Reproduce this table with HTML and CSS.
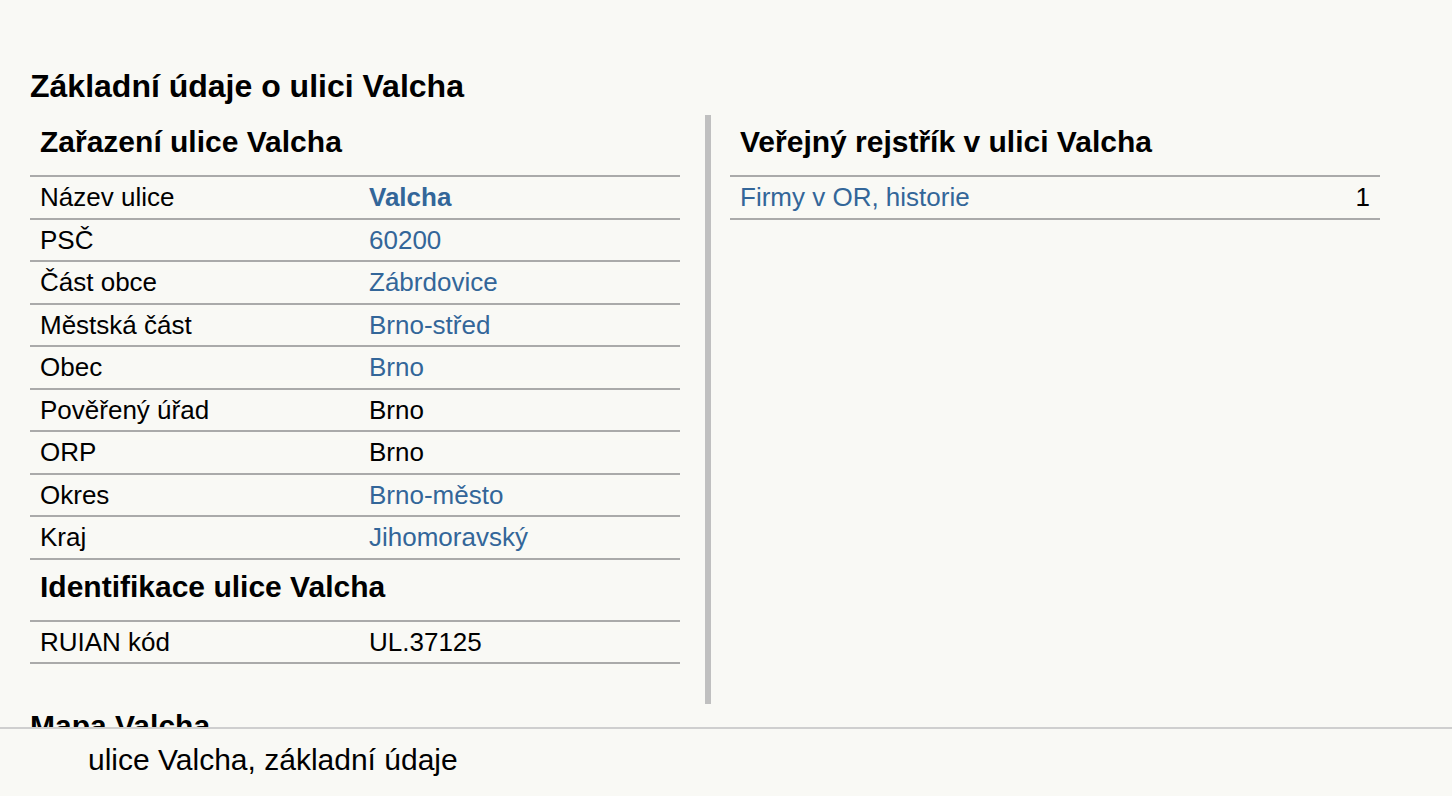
FILE: index.html
```html
<!DOCTYPE html>
<html lang="cs">
<head>
<meta charset="utf-8">
<title>ulice Valcha, základní údaje</title>
<link rel="stylesheet" href="styles.css">
</head>
<body>
<main class="main">
  <h1 class="page-title">Základní údaje o ulici Valcha</h1>
  <div class="columns">
    <section class="col col-left">
      <h2 class="sec-title">Zařazení ulice Valcha</h2>
      <table class="info">
        <tr><td class="lbl">Název ulice</td><td><a class="lnk strong" href="#">Valcha</a></td></tr>
        <tr><td class="lbl">PSČ</td><td><a class="lnk" href="#">60200</a></td></tr>
        <tr><td class="lbl">Část obce</td><td><a class="lnk" href="#">Zábrdovice</a></td></tr>
        <tr><td class="lbl">Městská část</td><td><a class="lnk" href="#">Brno-střed</a></td></tr>
        <tr><td class="lbl">Obec</td><td><a class="lnk" href="#">Brno</a></td></tr>
        <tr><td class="lbl">Pověřený úřad</td><td>Brno</td></tr>
        <tr><td class="lbl">ORP</td><td>Brno</td></tr>
        <tr><td class="lbl">Okres</td><td><a class="lnk" href="#">Brno-město</a></td></tr>
        <tr><td class="lbl">Kraj</td><td><a class="lnk" href="#">Jihomoravský</a></td></tr>
      </table>
      <h2 class="sec-title">Identifikace ulice Valcha</h2>
      <table class="info">
        <tr><td class="lbl">RUIAN kód</td><td>UL.37125</td></tr>
      </table>
    </section>
    <section class="col col-right">
      <h2 class="sec-title">Veřejný rejstřík v ulici Valcha</h2>
      <table class="info">
        <tr><td><a class="lnk" href="#">Firmy v OR, historie</a></td><td class="num">1</td></tr>
      </table>
    </section>
  </div>
  <h2 class="map-title">Mapa Valcha</h2>
</main>
<footer class="footbar">ulice Valcha, základní údaje</footer>
</body>
</html>
```
FILE: styles.css
```css
html, body {
  margin: 0;
  padding: 0;
  background: #f9f9f5;
  color: #000;
  font-family: "Liberation Sans", Arial, sans-serif;
}

.main {
  padding: 68px 30px 60px;
}

.page-title {
  margin: 0 0 10px;
  font-size: 32px;
  font-weight: bold;
  line-height: normal;
}

.columns {
  display: flex;
  align-items: stretch;
}

.col {
  width: 650px;
  flex: none;
}

.col-left {
  padding-bottom: 40px;
}

.col-right {
  margin-left: 25px;
  border-left: 6px solid #c0c0c0;
  padding-left: 19px;
}

.sec-title {
  margin: 10px 0 16px;
  padding-left: 10px;
  font-size: 30px;
  font-weight: bold;
  line-height: normal;
}

.info {
  width: 100%;
  border-collapse: collapse;
  border-top: 2px solid #aaa;
  font-size: 26px;
}

.info td {
  padding: 5px 10px;
  line-height: 30.5px;
  border-bottom: 2px solid #aaa;
  vertical-align: top;
  white-space: nowrap;
}

.info td.lbl {
  width: 309px;
}

.info td.num {
  text-align: right;
}

.lnk {
  color: #336699;
  text-decoration: none;
}

.lnk.strong {
  font-weight: bold;
}

.map-title {
  margin: 5px 0 0;
  font-size: 30px;
  font-weight: bold;
  line-height: normal;
}

.footbar {
  position: fixed;
  left: 0;
  right: 0;
  bottom: 0;
  height: 69px;
  box-sizing: border-box;
  padding: 14px 0 0 88px;
  border-top: 2px solid #cfcfcf;
  background: #f9f9f5;
  font-size: 30px;
  line-height: normal;
}
```
